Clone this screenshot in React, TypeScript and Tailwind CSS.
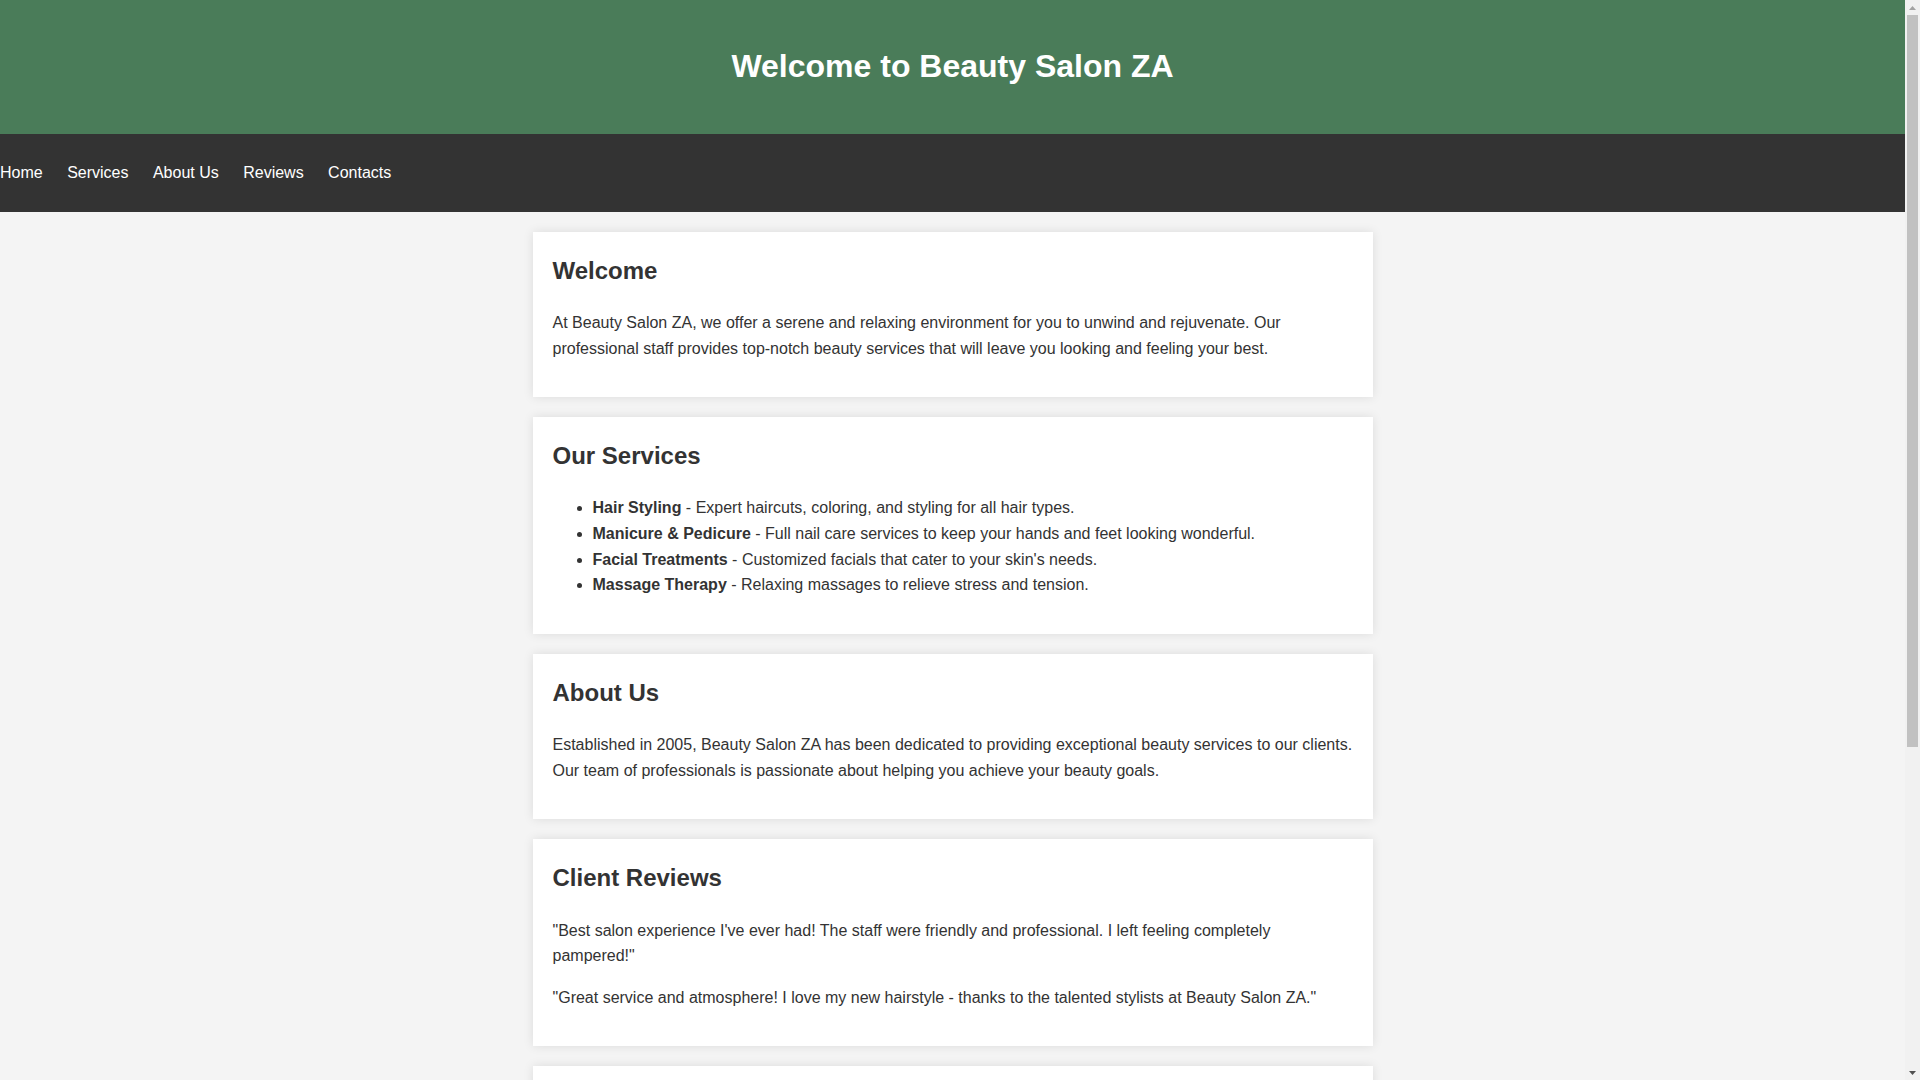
const navLinks = ['Home', 'Services', 'About Us', 'Reviews', 'Contacts']

const services = [
  { name: 'Hair Styling', text: 'Expert haircuts, coloring, and styling for all hair types.' },
  { name: 'Manicure & Pedicure', text: 'Full nail care services to keep your hands and feet looking wonderful.' },
  { name: 'Facial Treatments', text: "Customized facials that cater to your skin's needs." },
  { name: 'Massage Therapy', text: 'Relaxing massages to relieve stress and tension.' },
]

function Section({ title, children }: { title: string; children: React.ReactNode }) {
  return (
    <section className="bg-white p-5 mb-5 shadow-[0_0_10px_rgba(0,0,0,0.1)]">
      <h2 className="text-[24px] font-bold leading-[1.6] mb-[19.92px]">{title}</h2>
      {children}
    </section>
  )
}

function Scrollbar() {
  return (
    <div className="w-[15px] shrink-0 h-full bg-[#f1f1f1] flex flex-col">
      <div className="h-[15px] flex items-center justify-center">
        <svg width="7" height="4" viewBox="0 0 7 4">
          <path d="M0 4L3.5 0L7 4Z" fill="#a3a3a3" />
        </svg>
      </div>
      <div className="flex-1 px-[2px]">
        <div className="h-[732px] bg-[#c1c1c1]" />
      </div>
      <div className="h-[15px] flex items-center justify-center">
        <svg width="7" height="4" viewBox="0 0 7 4">
          <path d="M0 0L3.5 4L7 0Z" fill="#505050" />
        </svg>
      </div>
    </div>
  )
}

export default function App() {
  return (
    <div className="h-screen flex overflow-hidden bg-[#f4f4f4] text-[#333] text-[16px] leading-[1.6] font-['Liberation_Sans',Arial,sans-serif]">
      <div className="flex-1 min-w-0 h-full overflow-hidden">
        {/* Header */}
        <header className="bg-[#4a7c59] text-white text-center py-5">
          <h1 className="text-[32px] font-bold leading-[1.6] my-[21.44px]">Welcome to Beauty Salon ZA</h1>
        </header>

        {/* Nav */}
        <nav className="bg-[#333] py-2.5">
          <ul className="my-4 flex gap-[24.45px]">
            {navLinks.map((l) => (
              <li key={l}>
                <a href={`#${l.toLowerCase().replace(' ', '')}`} className="text-white">
                  {l}
                </a>
              </li>
            ))}
          </ul>
        </nav>

        {/* Content */}
        <main className="max-w-[840px] mx-auto pt-5">
          <Section title="Welcome">
            <p className="mb-4">
              At Beauty Salon ZA, we offer a serene and relaxing environment for you to unwind and rejuvenate. Our
              professional staff provides top-notch beauty services that will leave you looking and feeling your best.
            </p>
          </Section>

          <Section title="Our Services">
            <ul className="list-disc pl-10 mb-4">
              {services.map((s) => (
                <li key={s.name}>
                  <strong className="font-bold">{s.name}</strong> - {s.text}
                </li>
              ))}
            </ul>
          </Section>

          <Section title="About Us">
            <p className="mb-4">
              Established in 2005, Beauty Salon ZA has been dedicated to providing exceptional beauty services to our
              clients. Our team of professionals is passionate about helping you achieve your beauty goals.
            </p>
          </Section>

          <Section title="Client Reviews">
            <p className="mb-4">
              "Best salon experience I've ever had! The staff were friendly and professional. I left feeling completely
              pampered!"
            </p>
            <p className="mb-4">
              "Great service and atmosphere! I love my new hairstyle - thanks to the talented stylists at Beauty Salon
              ZA."
            </p>
          </Section>

          <Section title="Contact Us">
            <p className="mb-4">Address: 123 Beauty Street, Cape Town, South Africa</p>
            <p className="mb-4">Phone: +27 21 123 4567</p>
          </Section>
        </main>
      </div>
      <Scrollbar />
    </div>
  )
}
